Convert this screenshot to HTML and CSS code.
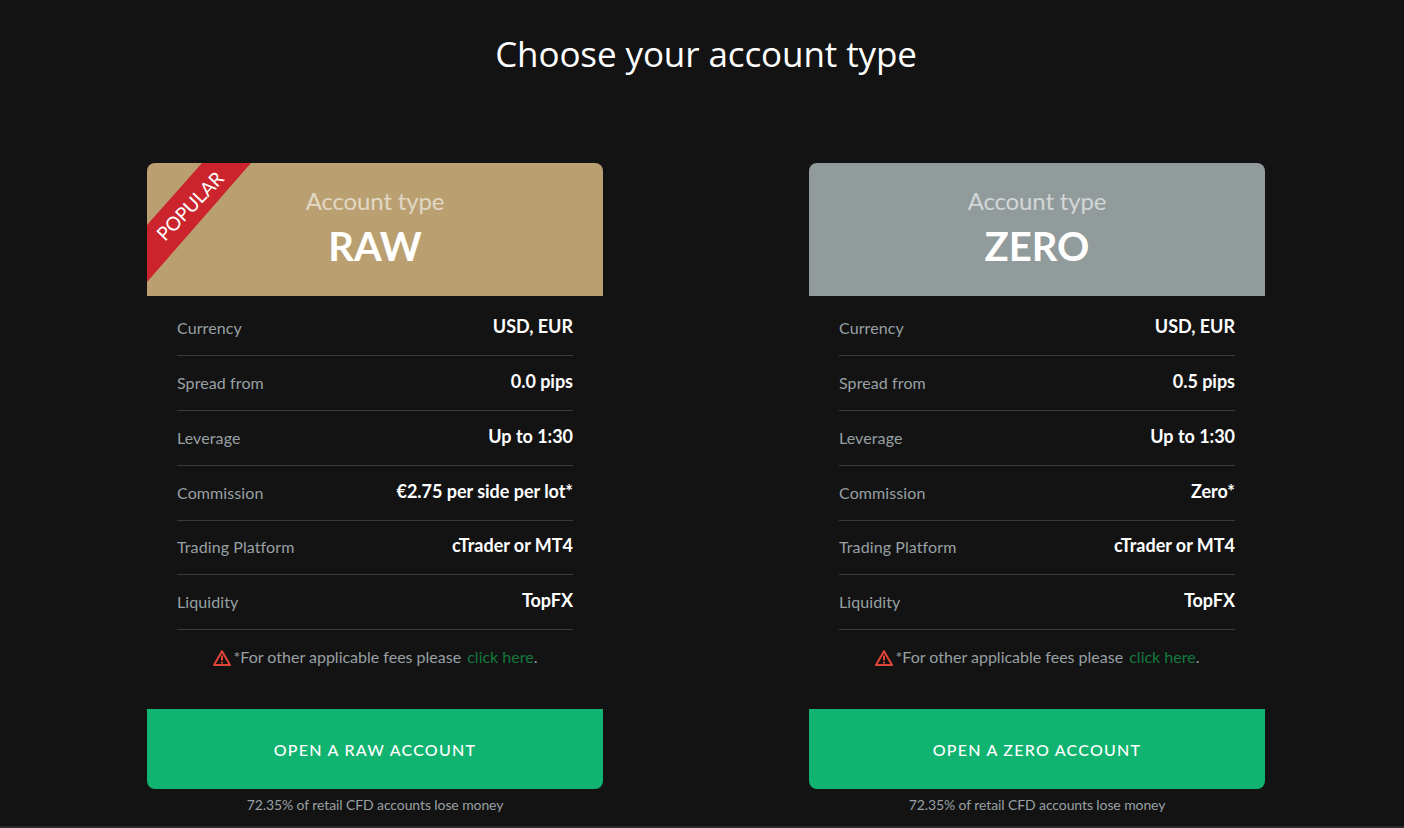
FILE: index.html
```html
<!DOCTYPE html>
<html lang="en">
<head>
<meta charset="utf-8">
<title>Choose your account type</title>
<link rel="stylesheet" href="styles.css">
</head>
<body>
<main class="page">
  <h1 class="title">Choose your account type</h1>
  <div class="cards">
    <section class="card">
      <header class="card-head head-raw">
        <div class="ribbon"><span class="ribbon-text">POPULAR</span></div>
        <div class="head-label">Account type</div>
        <div class="head-name">RAW</div>
      </header>
      <dl class="rows">
        <div class="row"><dt>Currency</dt><dd>USD, EUR</dd></div>
        <div class="row"><dt>Spread from</dt><dd>0.0 pips</dd></div>
        <div class="row"><dt>Leverage</dt><dd>Up to 1:30</dd></div>
        <div class="row"><dt>Commission</dt><dd>€2.75 per side per lot*</dd></div>
        <div class="row"><dt>Trading Platform</dt><dd>cTrader or MT4</dd></div>
        <div class="row"><dt>Liquidity</dt><dd>TopFX</dd></div>
      </dl>
      <p class="note">
        <svg class="warn" viewBox="0 0 18 16" width="18" height="16"><path d="M9 1.2 1 15h16z" fill="none" stroke="#e0453a" stroke-width="2" stroke-linejoin="round"/><path d="M9 5.6v5M9 11.8v1.6" stroke="#e0453a" stroke-width="2"/></svg>
        <span>*For other applicable fees please <a class="note-link" href="#">click here</a>.</span>
      </p>
      <a class="cta" href="#">OPEN A RAW ACCOUNT</a>
      <p class="risk">72.35% of retail CFD accounts lose money</p>
    </section>
    <section class="card">
      <header class="card-head head-zero">
        <div class="head-label">Account type</div>
        <div class="head-name">ZERO</div>
      </header>
      <dl class="rows">
        <div class="row"><dt>Currency</dt><dd>USD, EUR</dd></div>
        <div class="row"><dt>Spread from</dt><dd>0.5 pips</dd></div>
        <div class="row"><dt>Leverage</dt><dd>Up to 1:30</dd></div>
        <div class="row"><dt>Commission</dt><dd>Zero*</dd></div>
        <div class="row"><dt>Trading Platform</dt><dd>cTrader or MT4</dd></div>
        <div class="row"><dt>Liquidity</dt><dd>TopFX</dd></div>
      </dl>
      <p class="note">
        <svg class="warn" viewBox="0 0 18 16" width="18" height="16"><path d="M9 1.2 1 15h16z" fill="none" stroke="#e0453a" stroke-width="2" stroke-linejoin="round"/><path d="M9 5.6v5M9 11.8v1.6" stroke="#e0453a" stroke-width="2"/></svg>
        <span>*For other applicable fees please <a class="note-link" href="#">click here</a>.</span>
      </p>
      <a class="cta" href="#">OPEN A ZERO ACCOUNT</a>
      <p class="risk">72.35% of retail CFD accounts lose money</p>
    </section>
  </div>
</main>
</body>
</html>
```
FILE: styles.css
```css
* { box-sizing: border-box; }
html, body { margin: 0; height: 100%; }
body {
  background: #131313;
  color: #fff;
  font-family: "Lato", "Liberation Sans", sans-serif;
  overflow: hidden;
}
.page { height: 828px; padding: 28px 139px 0 147px; border-bottom: 2px solid #2a2a2a; }
.title {
  margin: 0 0 84px;
  height: 51px;
  font-family: "Open Sans", "Noto Sans", sans-serif;
  font-size: 35px;
  font-weight: 400;
  line-height: 51px;
  letter-spacing: -.1px;
  text-align: center;
  width: 1118px;
}
.cards { display: grid; grid-template-columns: 456px 456px; column-gap: 206px; }
.card { display: flex; flex-direction: column; }
.card-head {
  position: relative;
  height: 133px;
  border-radius: 8px 8px 0 0;
  overflow: hidden;
  text-align: center;
  padding-top: 23px;
}
.head-raw { background: #baa071; }
.head-zero { background: #929b9b; }
.head-label { font-size: 24px; line-height: 30px; letter-spacing: -.15px; color: rgba(255,255,255,.6); }
.head-name { font-size: 40px; font-weight: 700; line-height: 48px; margin-top: 6px; }
.ribbon {
  position: absolute;
  left: 0; top: 0;
  width: 104px; height: 119px;
  background: #cb242d;
  clip-path: polygon(55px 0, 104px 0, 0 119px, 0 62px);
}
.ribbon-text {
  position: absolute;
  left: 43px; top: 43px;
  transform: translate(-50%, -50%) rotate(-46deg);
  font-size: 19px;
  line-height: 22px;
  white-space: nowrap;
}
.rows { margin: 0; padding: 5px 30px 0; }
.row {
  display: flex;
  justify-content: space-between;
  height: 54.88px;
  border-bottom: 1px solid #3a3a3a;
  padding-top: 13.9px;
}
.row dt { font-size: 16px; line-height: 26px; letter-spacing: .1px; color: #98a0a3; }
.row dd { margin: 0; font-size: 18px; font-weight: 700; line-height: 22px; letter-spacing: -.03px; }
.note {
  display: flex;
  justify-content: center;
  align-items: center;
  gap: 3px;
  margin: 16px 0 42px;
  height: 21px;
  font-size: 16px;
  color: #98a0a3;
}
.warn { flex: none; margin-top: 3px; }
.note-link { color: #127a3d; text-decoration: none; margin-left: 2px; }
.cta {
  display: block;
  height: 80px;
  background: #10b36f;
  border-radius: 0 0 8px 8px;
  color: #fff;
  text-decoration: none;
  text-align: center;
  font-size: 16px;
  font-weight: 500;
  letter-spacing: 1.25px;
  line-height: 82px;
}
.risk { margin: 7px 0 0; font-size: 14px; line-height: 18px; letter-spacing: -.1px; color: #98a0a3; text-align: center; }
```
